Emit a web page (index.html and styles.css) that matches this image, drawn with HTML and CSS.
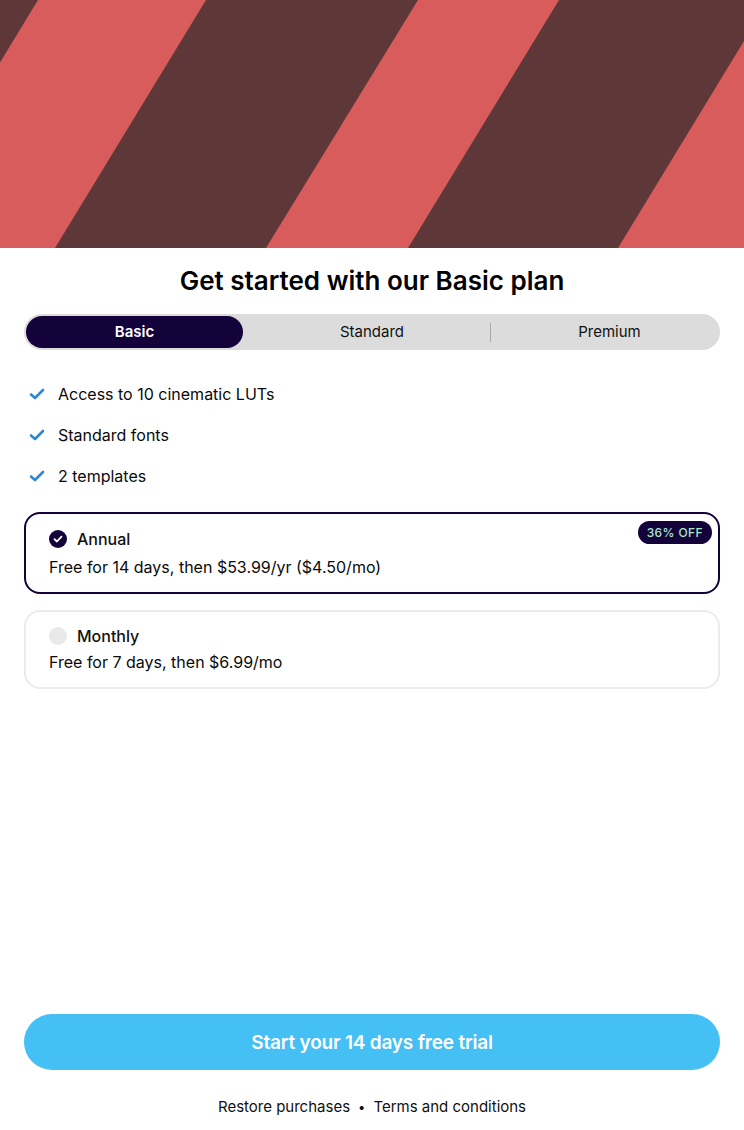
FILE: index.html
```html
<!DOCTYPE html>
<html lang="en">
<head>
<meta charset="utf-8">
<title>Basic plan</title>
<link rel="stylesheet" href="styles.css">
</head>
<body>
<div class="page">
  <div class="hero">
    <svg class="hero-art" viewBox="0 0 744 248" preserveAspectRatio="none" width="744" height="248">
      <rect x="0" y="0" width="744" height="248" fill="#5E3838"/>
      <polygon points="38,0 206,0 55,248 -113,248" fill="#D85C5B"/>
      <polygon points="418,0 559,0 408,248 266,248" fill="#D85C5B"/>
      <polygon points="769,0 900,0 900,248 618,248" fill="#D85C5B"/>
    </svg>
  </div>

  <div class="content">
    <h1 class="title">Get started with our Basic plan</h1>

    <div class="segmented">
      <div class="seg seg-active">Basic</div>
      <div class="seg">Standard</div>
      <div class="seg seg-divided">Premium</div>
    </div>

    <ul class="features">
      <li class="feature">
        <svg class="check" viewBox="0 0 16 14" width="16" height="14"><path d="M2 7.5 L6 11 L14 3" fill="none" stroke="#2F86D3" stroke-width="2.6" stroke-linecap="round" stroke-linejoin="round"/></svg>
        <span>Access to 10 cinematic LUTs</span>
      </li>
      <li class="feature">
        <svg class="check" viewBox="0 0 16 14" width="16" height="14"><path d="M2 7.5 L6 11 L14 3" fill="none" stroke="#2F86D3" stroke-width="2.6" stroke-linecap="round" stroke-linejoin="round"/></svg>
        <span>Standard fonts</span>
      </li>
      <li class="feature">
        <svg class="check" viewBox="0 0 16 14" width="16" height="14"><path d="M2 7.5 L6 11 L14 3" fill="none" stroke="#2F86D3" stroke-width="2.6" stroke-linecap="round" stroke-linejoin="round"/></svg>
        <span>2 templates</span>
      </li>
    </ul>

    <div class="plan plan-selected">
      <span class="badge">36% OFF</span>
      <div class="plan-head">
        <svg class="radio" viewBox="0 0 18 18" width="18" height="18"><circle cx="9" cy="9" r="9" fill="#14023A"/><path d="M5.5 9.2 L7.9 11.5 L12.5 6.6" fill="none" stroke="#fff" stroke-width="1.8" stroke-linecap="round" stroke-linejoin="round"/></svg>
        <span class="plan-name">Annual</span>
      </div>
      <div class="plan-desc">Free for 14 days, then $53.99/yr ($4.50/mo)</div>
    </div>

    <div class="plan plan-other">
      <div class="plan-head">
        <span class="radio radio-empty"></span>
        <span class="plan-name">Monthly</span>
      </div>
      <div class="plan-desc">Free for 7 days, then $6.99/mo</div>
    </div>
  </div>

  <div class="bottom">
    <button class="cta">Start your 14 days free trial</button>
    <div class="links">
      <span>Restore purchases</span>
      <span class="dot">•</span>
      <span>Terms and conditions</span>
    </div>
  </div>
</div>
</body>
</html>
```

FILE: styles.css
```css
* { box-sizing: border-box; }

html, body {
  margin: 0;
  padding: 0;
  background: #ffffff;
}

body {
  font-family: Inter, "Noto Sans", "Liberation Sans", sans-serif;
  color: #0a0a0a;
}

.page {
  width: 744px;
  height: 1130px;
  display: flex;
  flex-direction: column;
  overflow: hidden;
}

.hero {
  height: 248px;
  flex: none;
}

.hero-art {
  display: block;
}

.content {
  padding: 0 24px;
  display: flex;
  flex-direction: column;
}

.title {
  margin: 17px 0 0;
  font-size: 26px;
  line-height: 32px;
  font-weight: 600;
  text-align: center;
  letter-spacing: 0;
  color: #000;
}

.segmented {
  margin-top: 17px;
  height: 36px;
  background: #DCDCDC;
  border-radius: 18px;
  padding: 2px;
  display: grid;
  grid-template-columns: 217px 258px 1fr;
}

.seg {
  position: relative;
  display: flex;
  align-items: center;
  justify-content: center;
  font-size: 15px;
  line-height: 30px;
  padding-bottom: 1px;
  color: #111;
  border-radius: 16px;
}

.seg-active {
  background: #14023A;
  color: #fff;
  font-weight: 600;
}

.seg-divided::before {
  content: "";
  position: absolute;
  left: -11px;
  top: 7px;
  bottom: 6px;
  width: 1px;
  background: #a9a9a9;
}

.features {
  list-style: none;
  margin: 23px 0 0;
  padding: 0;
}

.feature {
  height: 41px;
  display: flex;
  align-items: center;
  font-size: 16px;
}

.check {
  margin-left: 5px;
  margin-right: 13px;
  flex: none;
}

.plan {
  position: relative;
  border-radius: 16px;
  padding: 14px 22px 14px 23px;
}

.plan-selected {
  margin-top: 16px;
  border: 2px solid #14023A;
}

.plan-other {
  margin-top: 16px;
  border: 2px solid #EBEBEB;
  padding-top: 13px;
}

.plan-head {
  display: flex;
  align-items: center;
  height: 22px;
}

.radio {
  flex: none;
  width: 18px;
  height: 18px;
  margin-right: 10px;
  margin-left: 0;
}

.radio-empty {
  display: block;
  border-radius: 50%;
  background: #E9E9EC;
}

.plan-name {
  font-size: 16px;
  font-weight: 500;
  color: #111;
}

.plan-desc {
  margin-top: 6px;
  font-size: 16px;
  line-height: 22px;
}

.plan-other .plan-desc {
  margin-top: 4px;
}

.badge {
  position: absolute;
  top: 7px;
  right: 6px;
  height: 23px;
  padding: 0 9px;
  border-radius: 12px;
  background: #14023A;
  color: #A6EBC6;
  font-size: 12px;
  font-weight: 500;
  letter-spacing: 0.4px;
  display: flex;
  align-items: center;
}

.bottom {
  margin-top: auto;
  padding: 0 24px 13px;
  display: flex;
  flex-direction: column;
  align-items: stretch;
}

.cta {
  height: 56px;
  border: none;
  border-radius: 28px;
  background: #44C0F5;
  color: #fff;
  font-family: Inter, "Noto Sans", "Liberation Sans", sans-serif;
  font-size: 19px;
  font-weight: 600;
  letter-spacing: -0.2px;
}

.links {
  margin-top: 27px;
  height: 20px;
  line-height: 20px;
  display: flex;
  justify-content: center;
  gap: 8px;
  font-size: 15px;
  color: #111;
}

.dot {
  font-size: 13px;
}
```
